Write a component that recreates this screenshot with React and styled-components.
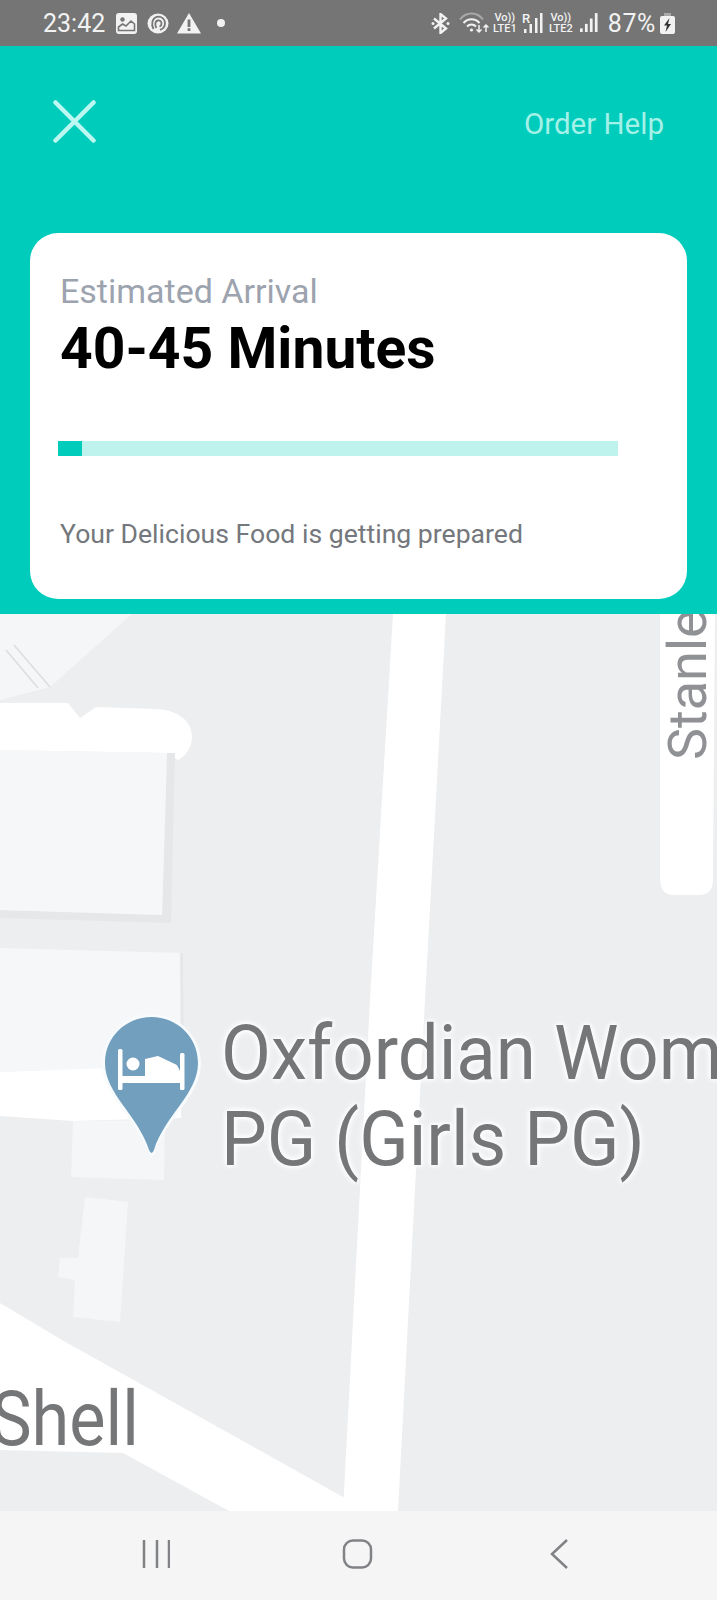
import React from "react";
import styled, { createGlobalStyle } from "styled-components";

const Global = createGlobalStyle`
  html, body { margin: 0; padding: 0; background: #edeef0; }
  body { font-family: Roboto, "Liberation Sans", sans-serif; }
  * { box-sizing: border-box; }
`;

const Page = styled.div`
  width: 717px;
  height: 1600px;
  display: flex;
  flex-direction: column;
  overflow: hidden;
`;

const StatusBar = styled.div`
  height: 46px;
  flex: none;
  background: #757575;
  color: #f2f2f2;
  display: flex;
  align-items: center;
  justify-content: space-between;
  padding: 0 42px 0 43px;
`;

const StatusGroup = styled.div`
  display: flex;
  align-items: center;
  height: 100%;
`;

const StatusText = styled.span`
  font-size: 25px;
  line-height: 30px;
  padding-top: 1px;
  margin-left: ${(p) => p.$gap || 0}px;
  letter-spacing: ${(p) => p.$spacing || 0};
  white-space: nowrap;
`;

const StatusIcon = styled.svg`
  display: block;
  flex: none;
  margin-left: ${(p) => p.$gap || 0}px;
`;

const NetStack = styled.div`
  flex: none;
  width: 26px;
  margin-left: ${(p) => p.$gap || 0}px;
  display: flex;
  flex-direction: column;
  align-items: center;
  font-size: 11px;
  line-height: 11px;
  font-weight: 500;
  color: #f2f2f2;
`;

const Hero = styled.section`
  flex: none;
  height: 568px;
  background: #00ccbc;
  padding: 0 30px 15px;
  display: flex;
  flex-direction: column;
`;

const TopBar = styled.div`
  height: 187px;
  flex: none;
  display: flex;
  justify-content: space-between;
  align-items: flex-start;
  padding: 54px 23px 0 23px;
`;

const CloseIcon = styled.svg`
  display: block;
`;

const HelpLink = styled.a`
  font-size: 29.500px;
  line-height: 34px;
  color: #a4f1e8;
  margin-top: 7px;
`;

const Card = styled.div`
  flex: 1;
  background: #fff;
  border-radius: 28px;
  padding: 39px 0 0 28px;
`;

const Eyebrow = styled.div`
  font-size: 34px;
  line-height: 38px;
  color: #9ca3ae;
  margin-left: 2px;
`;

const Eta = styled.div`
  font-size: 57px;
  line-height: 60px;
  font-weight: 700;
  color: #000;
  margin: 9px 0 0 2px;
`;

const Track = styled.div`
  width: 560px;
  height: 15px;
  margin-top: 62px;
  background: #bdf3ec;
`;

const TrackFill = styled.div`
  height: 100%;
  width: 24px;
  background: #00ccbc;
`;

const StatusLine = styled.div`
  font-size: 26.600px;
  line-height: 32px;
  color: #74777c;
  margin: 62px 0 0 2px;
`;

const MapArea = styled.div`
  flex: 1;
  position: relative;
  overflow: hidden;
  background: #edeef0;
`;

const MapShapes = styled.svg`
  position: absolute;
  inset: 0;
  width: 100%;
  height: 100%;
  filter: blur(0.7px);
`;

const PlaceLabel = styled.div`
  position: absolute;
  left: ${(p) => p.$x}px;
  top: ${(p) => p.$y}px;
  font-size: 76px;
  line-height: 86px;
  color: #757678;
  white-space: pre;
  transform-origin: 0 0;
  transform: scaleX(${(p) => p.$squeeze});
  text-shadow: 0 0 4px #fff, 0 0 6px #fff, 0 0 8px #fff;
`;

const StreetLabel = styled.div`
  position: absolute;
  left: 661px;
  top: 146px;
  font-size: 54px;
  line-height: 54px;
  color: #909194;
  white-space: pre;
  transform-origin: 0 0;
  transform: rotate(-90deg);
`;

const Pin = styled.svg`
  position: absolute;
  left: 101px;
  top: 399px;
`;

const NavBar = styled.nav`
  flex: none;
  height: 89px;
  background: #f5f5f5;
  display: flex;
  align-items: flex-start;
  padding: 28px 0 0 140px;
`;

const NavIcon = styled.svg`
  display: block;
  flex: none;
  margin-left: ${(p) => p.$gap || 0}px;
`;

const Bars = ({ gap, w = 20 }) => (
  <StatusIcon $gap={gap} width={w} height="22" viewBox="0 0 20 22" fill="#f2f2f2">
    <rect x="0" y="17" width="3" height="4" />
    <rect x="5.500" y="12" width="3" height="9" />
    <rect x="11" y="6" width="3" height="15" />
    <rect x="16.500" y="0" width="3" height="21" />
  </StatusIcon>
);

export default function App() {
  return (
    <Page>
      <Global />
      <StatusBar>
        <StatusGroup>
          <StatusText>23:42</StatusText>
          <StatusIcon $gap={11} width="21" height="21" viewBox="0 0 21 21">
            <rect width="21" height="21" rx="3" fill="#f2f2f2" />
            <circle cx="6.500" cy="6.500" r="2.200" fill="#757575" />
            <path d="M2.500 17.500V14l4-3 3.500 2 5-5 3.500 3v6.500z" fill="none" stroke="#757575" strokeWidth="1.600" />
          </StatusIcon>
          <StatusIcon $gap={10} width="22" height="21" viewBox="0 0 22 21" fill="none" stroke="#f2f2f2">
            <ellipse cx="11" cy="10.500" rx="10.500" ry="10" fill="#f2f2f2" stroke="none" />
            <path d="M6.500 16C4 11.500 5 5 10 3.800c4.500-.8 8 2.200 8 6.200 0 3.200-2 6-5 6.800" stroke="#757575" strokeWidth="1.800" />
            <path d="M9.500 15c-1.800-2.800-1.500-7 1.200-7.500 2.200-.5 4 1 3.800 3.200 0 1.500-.8 2.500-2 3" stroke="#757575" strokeWidth="1.800" />
          </StatusIcon>
          <StatusIcon $gap={8} width="24" height="21" viewBox="0 0 24 21">
            <path d="M12 0L24 20.500H0z" fill="#f2f2f2" />
            <rect x="10.600" y="6.500" width="2.800" height="7.500" fill="#757575" />
            <rect x="10.600" y="15.200" width="2.800" height="2.800" fill="#757575" />
          </StatusIcon>
          <StatusIcon $gap={16} width="8" height="8" viewBox="0 0 8 8">
            <circle cx="4" cy="4" r="4" fill="#f2f2f2" />
          </StatusIcon>
        </StatusGroup>
        <StatusGroup>
          <StatusIcon width="19" height="21" viewBox="0 0 19 21" fill="none" stroke="#f2f2f2" strokeWidth="2.400">
            <path d="M3 5.500l12 10-5.500 4.500V1L15 5.500l-12 10" />
            <circle cx="2" cy="10.500" r="1.500" fill="#f2f2f2" stroke="none" />
            <circle cx="17" cy="10.500" r="1.500" fill="#f2f2f2" stroke="none" />
          </StatusIcon>
          <StatusIcon $gap={9} width="30" height="22" viewBox="0 0 30 22" fill="none" strokeWidth="2">
            <path d="M1 7.500C7-.5 18-.5 24 7.500" stroke="#a9a9a9" />
            <path d="M4.500 11c4.500-5 11.500-5 16 0" stroke="#f2f2f2" />
            <path d="M8 14.500c2.500-2.600 6.500-2.600 9 0" stroke="#f2f2f2" />
            <circle cx="12.500" cy="18" r="1.600" fill="#f2f2f2" />
            <path d="M20 13v7m-2.500-2.500L20 20l2.500-2.500M27 20v-7m-2.500 2.500L27 13l2.500 2.500" stroke="#f2f2f2" strokeWidth="1.500" />
          </StatusIcon>
          <NetStack $gap={3}>
            <span>Vo))</span>
            <span>LTE1</span>
          </NetStack>
          <StatusIcon $gap={4} width="21" height="22" viewBox="0 0 21 22" fill="#f2f2f2">
            <text x="0" y="10.500" fontSize="13" fontWeight="500" fontFamily="Roboto, sans-serif">R</text>
            <rect x="2" y="17" width="2.500" height="4" />
            <rect x="7.500" y="12" width="2.500" height="9" />
            <rect x="13" y="6" width="2.500" height="15" />
            <rect x="18" y="1" width="2.500" height="20" />
          </StatusIcon>
          <NetStack $gap={5}>
            <span>Vo))</span>
            <span>LTE2</span>
          </NetStack>
          <Bars gap={6} w={18} />
          <StatusText $gap={10} $spacing="0.6px">87%</StatusText>
          <StatusIcon $gap={4} width="15" height="21" viewBox="0 0 15 21">
            <rect x="4" y="0" width="7" height="3" fill="#a9a9a9" />
            <rect x="0" y="3" width="15" height="18" rx="2" fill="#f2f2f2" />
            <path d="M9.500 5L4 12.500h3L5.500 19 11 11H8z" fill="#333" />
          </StatusIcon>
        </StatusGroup>
      </StatusBar>

      <Hero>
        <TopBar>
          <CloseIcon width="43" height="43" viewBox="0 0 43 43" fill="none" stroke="#bcf8f1" strokeWidth="4.500" strokeLinecap="round">
            <path d="M2.500 2.500l38 38M40.500 2.500l-38 38" />
          </CloseIcon>
          <HelpLink>Order Help</HelpLink>
        </TopBar>
        <Card>
          <Eyebrow>Estimated Arrival</Eyebrow>
          <Eta>40-45 Minutes</Eta>
          <Track>
            <TrackFill />
          </Track>
          <StatusLine>Your Delicious Food is getting prepared</StatusLine>
        </Card>
      </Hero>

      <MapArea>
        <MapShapes viewBox="0 614 717 897" preserveAspectRatio="none">
          <path d="M0 614H132L50 687 0 700z" fill="#f5f6f7" />
          <path d="M14 645l36 42M6 650l32 38" stroke="#dcdddf" strokeWidth="1.500" fill="none" />
          <path d="M0 703H68l12 15 16-11 60 2c22 1 36 12 36 28 0 10-6 19-14 23l-11-7-167-3z" fill="#fff" />
          <path d="M167 753h8l-4 170-171-5v-8l162 5z" fill="#e6e7e9" />
          <path d="M0 750l167 3-5 162-162-5z" fill="#f6f7f9" />
          <path d="M0 948l183 5-2 112-181 7z" fill="#f6f7f9" />
          <path d="M183 953l1 113h-3l-1-113z" fill="#e6e7e9" />
          <path d="M0 1072l181-7v53l-108 3-73-5z" fill="#fff" />
          <path d="M73 1121l92-1-1 60-93-3z" fill="#f5f6f8" />
          <path d="M85 1197l43 5-8 120-47-5 2-37-17-3 2-19h18z" fill="#f5f6f8" />
          <path d="M393 614h53l-21 386-18 340-9 171h-55l9-171 18-340z" fill="#fff" />
          <path d="M660 614h55l-2 265q0 16-14 16h-26q-12 0-13-16z" fill="#fff" />
          <path d="M0 1303l62 37 281 157 55 14H229l-106-58-123-3z" fill="#fff" />
        </MapShapes>
        <StreetLabel>Stanley</StreetLabel>
        <Pin width="101" height="144" viewBox="101 1013 101 144">
          <path d="M151.500 1014C178 1014 201 1036 201 1063 C201 1096 168 1116 155 1152 Q151.500 1160 148 1152 C135 1116 102 1096 102 1063 C102 1036 125 1014 151.500 1014z" fill="#f7fbfd" />
          <path d="M151.500 1017C177 1017 198 1037 198 1063 C198 1094 165 1115 154 1150 Q151.500 1156 149 1150 C138 1115 105 1094 105 1063 C105 1037 126 1017 151.500 1017z" fill="#719fbd" />
          <g fill="#fff">
            <rect x="118" y="1049" width="4.500" height="41" rx="1.500" />
            <rect x="180" y="1053" width="4.500" height="37" rx="1.500" />
            <rect x="118" y="1076" width="66" height="7" />
            <circle cx="133" cy="1064" r="6.500" />
            <path d="M145 1059l13-3 19 9 3 6v5h-35z" />
          </g>
          <path d="M172 1058l7-3v13z" fill="#719fbd" />
        </Pin>
        <PlaceLabel $x={221} $y={396} $squeeze={0.956}>{"Oxfordian Wom\nPG (Girls PG)"}</PlaceLabel>
        <PlaceLabel $x={-9} $y={762} $squeeze={0.9}>Shell</PlaceLabel>
      </MapArea>

      <NavBar>
        <NavIcon width="30" height="30" viewBox="0 0 30 30" fill="none" stroke="#808285" strokeWidth="2.500">
          <path d="M4 1v28M17 1v28M29 1v28" />
        </NavIcon>
        <NavIcon $gap={172} width="31" height="30" viewBox="0 0 31 30" fill="none" stroke="#808285" strokeWidth="2.500">
          <rect x="2" y="1.500" width="27" height="27" rx="9" />
        </NavIcon>
        <NavIcon $gap={177} width="18" height="30" viewBox="0 0 18 30" fill="none" stroke="#808285" strokeWidth="2.500">
          <path d="M17 1L2 15l15 14" />
        </NavIcon>
      </NavBar>
    </Page>
  );
}
